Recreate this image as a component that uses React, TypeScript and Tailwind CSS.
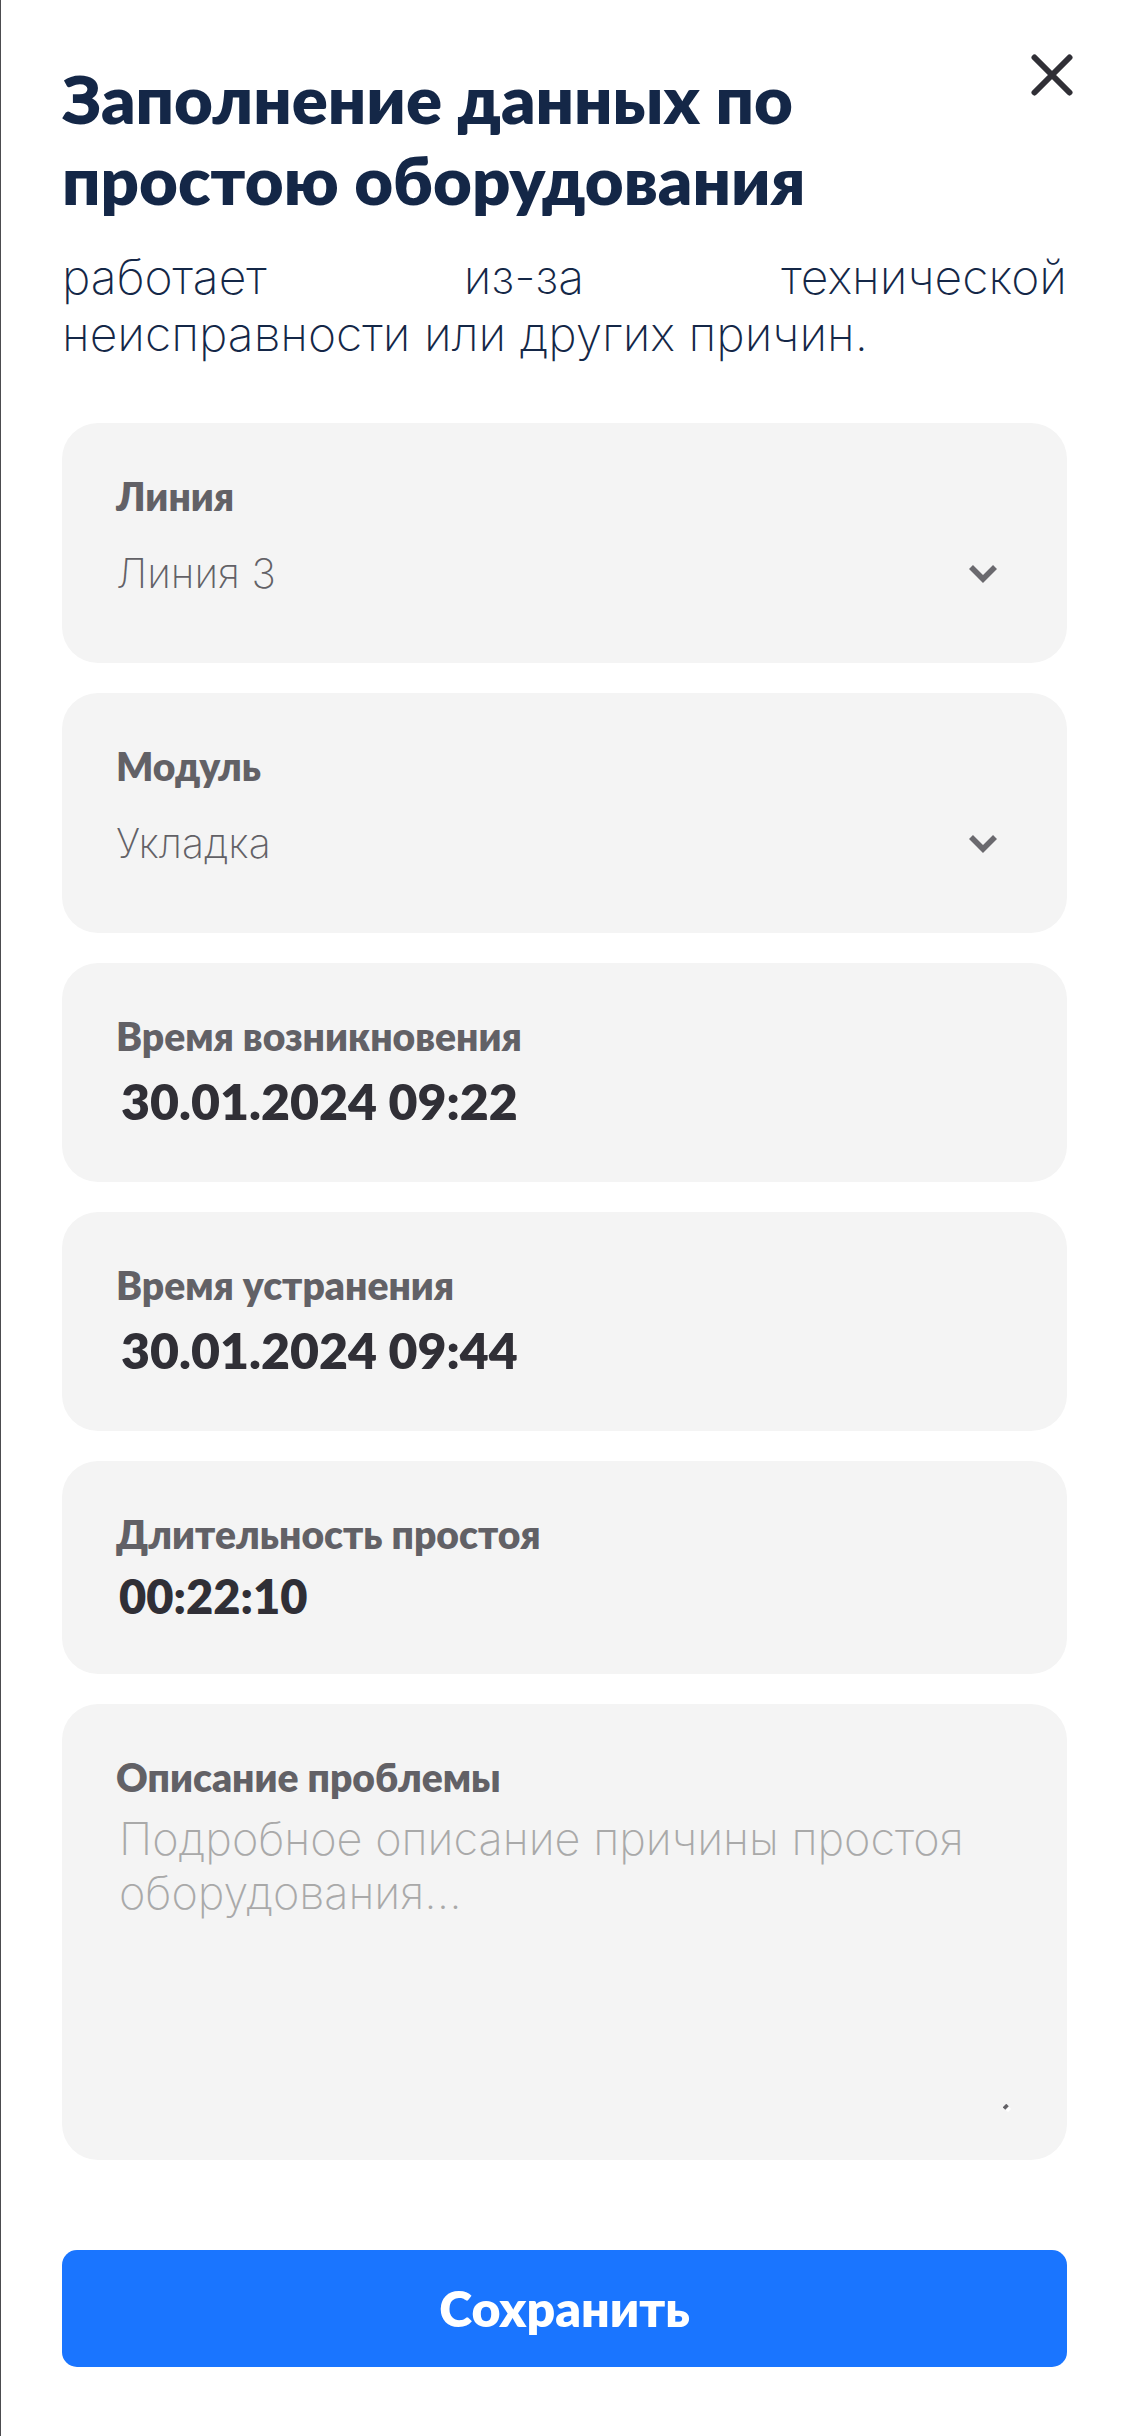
import React from 'react';

const cardClass = 'flex flex-col rounded-[36px] bg-[#f4f4f4] px-[54px] pt-[49px]';
const labelClass =
  "font-['Lato',sans-serif] text-[39px] leading-[48px] font-extrabold text-[#626166]";
const valueClass =
  "w-full bg-transparent font-['Lato',sans-serif] font-extrabold text-[#302f36] outline-none";

function SelectField({ id, label, options }: { id: string; label: string; options: string[] }) {
  return (
    <div className={`${cardClass} pb-[53px]`}>
      <label htmlFor={id} className={labelClass}>
        {label}
      </label>
      <div className="relative mt-[18px]">
        <select
          id={id}
          className="h-[72px] w-full appearance-none bg-transparent pr-20 text-[41px] font-extralight text-[#626166] outline-none"
        >
          {options.map((option) => (
            <option key={option}>{option}</option>
          ))}
        </select>
        <svg
          aria-hidden="true"
          viewBox="0 0 28 18"
          className="pointer-events-none absolute top-[27px] right-4 h-[18px] w-7"
        >
          <path d="M2 2 14 14 26 2" fill="none" stroke="#6a696e" strokeWidth="5.6" />
        </svg>
      </div>
    </div>
  );
}

function DateField({ id, label, value }: { id: string; label: string; value: string }) {
  return (
    <div className={`${cardClass} pb-[45px]`}>
      <label htmlFor={id} className={labelClass}>
        {label}
      </label>
      <input
        id={id}
        type="text"
        defaultValue={value}
        className={`${valueClass} mt-[5px] h-[72px] pl-[5px] text-[50px]`}
      />
    </div>
  );
}

export default function App() {
  return (
    <main className="relative min-h-screen border-l border-[#4c4c4f] bg-white pt-[58px] pr-[58px] pb-[69px] pl-[61px] font-['Inter',sans-serif]">
      <button
        type="button"
        aria-label="Закрыть"
        className="absolute top-[45px] right-[43px] flex size-[60px] items-center justify-center"
      >
        <svg aria-hidden="true" viewBox="0 0 42 42" className="size-[42px]">
          <path
            d="M3.500 3.500 38.500 38.500M38.500 3.500 3.500 38.500"
            fill="none"
            stroke="#302f36"
            strokeWidth="6"
            strokeLinecap="round"
          />
        </svg>
      </button>

      <h1 className="max-w-[800px] font-['Lato',sans-serif] text-[67px] leading-[81px] font-extrabold text-[#142747]">
        Заполнение данных по простою оборудования
      </h1>
      <p className="mt-[28px] text-[48px] leading-[57px] font-extralight text-[#142747]">
        <span className="block text-justify [text-align-last:justify]">работает из-за технической</span>{' '}
        <span className="block">неисправности или других причин.</span>
      </p>

      <form className="mt-[61px] flex flex-col gap-[30px]" onSubmit={(e: React.FormEvent) => e.preventDefault()}>
        <SelectField id="line" label="Линия" options={['Линия 3']} />
        <SelectField id="module" label="Модуль" options={['Укладка']} />
        <DateField id="started" label="Время возникновения" value="30.01.2024 09:22" />
        <DateField id="resolved" label="Время устранения" value="30.01.2024 09:44" />

        <div className={`${cardClass} pb-[45px]`}>
          <label htmlFor="duration" className={labelClass}>
            Длительность простоя
          </label>
          <input
            id="duration"
            type="text"
            defaultValue="00:22:10"
            className={`${valueClass} mt-[5px] h-[66px] pl-[3px] text-[47px]`}
          />
        </div>

        <div className={`${cardClass} pb-[45px]`}>
          <label htmlFor="description" className={labelClass}>
            Описание проблемы
          </label>
          <div className="relative mt-[5px] flex">
            <textarea
              id="description"
              placeholder="Подробное описание причины простоя оборудования..."
              className="h-[309px] w-full resize-none bg-transparent pt-[6px] pl-[3px] text-[45px] leading-[54px] font-extralight text-[#302f36] outline-none placeholder:text-[#a9a9a9]"
            />
            <svg
              aria-hidden="true"
              viewBox="0 0 8 8"
              className="pointer-events-none absolute right-[2px] bottom-[3px] size-2"
            >
              <path d="M1 4.500 4.500 1" stroke="#626166" strokeWidth="3.500" />
              <path d="M4 7 7 4" stroke="#ffffff" strokeWidth="3" />
            </svg>
          </div>
        </div>

        <button
          type="submit"
          className="mt-[60px] h-[117px] rounded-[15px] bg-[#1a75ff] font-['Lato',sans-serif] text-[50px] font-extrabold text-white"
        >
          Сохранить
        </button>
      </form>
    </main>
  );
}
